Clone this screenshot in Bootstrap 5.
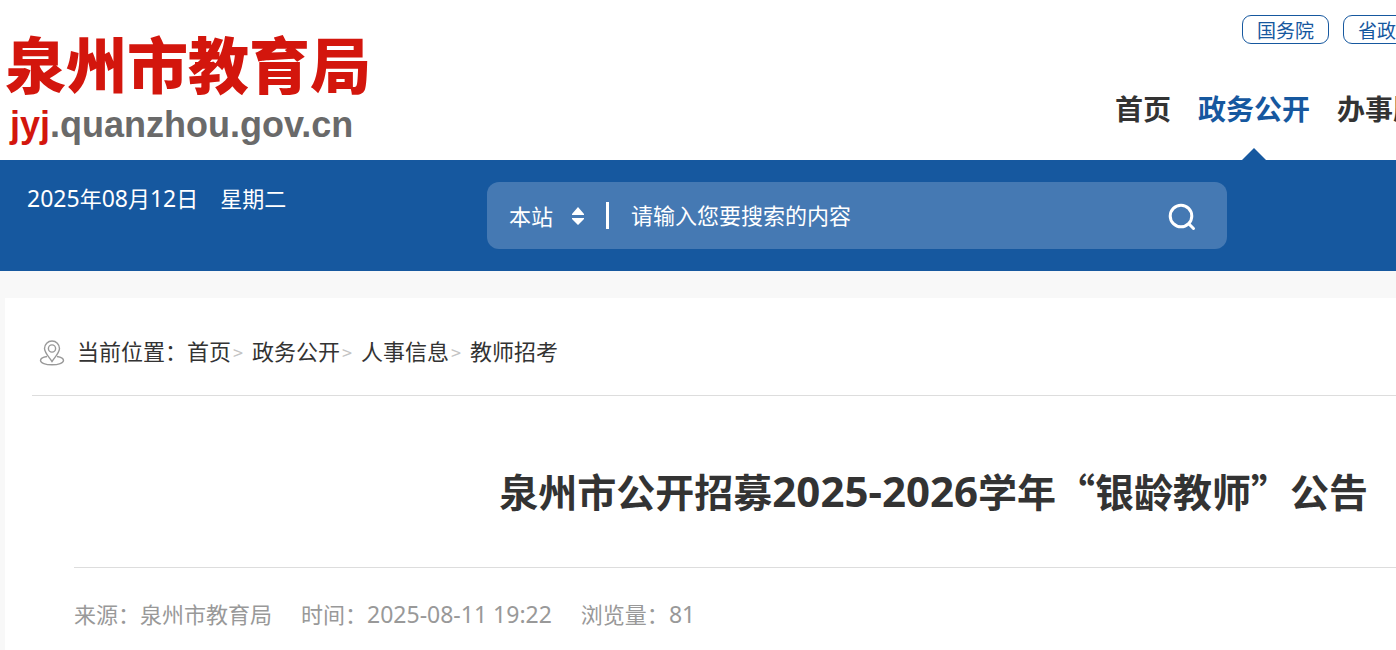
<!DOCTYPE html>
<html lang="zh-CN">
<head>
<meta charset="utf-8">
<meta name="viewport" content="width=device-width, initial-scale=1">
<title>泉州市公开招募2025-2026学年“银龄教师”公告</title>
<link href="https://cdn.jsdelivr.net/npm/bootstrap@5.3.0/dist/css/bootstrap.min.css" rel="stylesheet">
<style>
:root { --gov-blue: #16589f; --gov-red: #d3160d; }
body { font-family: "Noto Sans CJK SC", sans-serif; font-size: 22px; line-height: 32px; color: #333; background: #f8f8f8; overflow-x: hidden; }
a { color: inherit; text-decoration: none; }
.num { font-family: "Noto Sans", "Noto Sans CJK SC", sans-serif; font-size: 23px; }

.site-head { height: 160px; }
.site-logo { padding: 27px 0 0 5px; color: var(--gov-red); font-weight: 900; font-size: 61px; line-height: 72px; }
.site-url { font: 700 36px/48px "Liberation Sans", sans-serif; color: #6a6a6a; padding: 2px 0 0 5px; }
.site-url b { color: var(--gov-red); }
.head-side { flex: 0 0 281px; overflow: hidden; white-space: nowrap; }
.gov-links { padding: 15px 0 0 127px; gap: 14px; }
.gov-links a { flex: none; border: 1px solid var(--gov-blue); border-radius: 9px; color: var(--gov-blue); font-size: 19px; line-height: 27px; padding: 0 14px; }
.main-nav { gap: 27px; margin-top: 44px; font-size: 28px; font-weight: 700; line-height: 40px; }
.main-nav a { flex: none; height: 72px; }
.main-nav .current { color: var(--gov-blue); position: relative; }
.main-nav .current::after { content: ""; position: absolute; left: 50%; bottom: 0; margin-left: -12px; border: 12px solid transparent; border-top: 0; border-bottom-color: var(--gov-blue); }

.blue-bar { background: var(--gov-blue); padding: 22px 169px 22px 27px; color: #fff; }
.today { gap: 22px; line-height: 30px; }
.search-box { width: 740px; height: 67px; border-radius: 12px; background: #4579b3; padding: 0 30px 0 22px; }
.search-box select { appearance: none; border: 0; color: #fff; width: 75px; padding: 0 0 2px; background: url("data:image/svg+xml,%3Csvg xmlns='http://www.w3.org/2000/svg' width='12' height='20'%3E%3Cpath d='M6 1l6 7v1H0V8zM6 19l6-6v-1H0v1z' fill='white'/%3E%3C/svg%3E") right center no-repeat; }
.search-box input { border: 0; background: none; color: #fff; outline: 0; padding: 0 0 4px; min-width: 0; }
.search-box input::placeholder { color: #fff; opacity: 1; }
.bar-split { width: 3px; height: 27px; background: #fff; margin: 0 22px; }
.search-box button { border: 0; background: none; padding: 3px 0 0; color: #fff; }

.article { margin: 27px 0 0 5px; background: #fff; padding-left: 27px; }
.crumb-bar { height: 98px; border-bottom: 1px solid #ddd; padding: 12px 0 0 7px; }
.crumb-bar ol { padding-bottom: 3px; }
.crumb-bar li + li::before { content: ">"; display: inline-block; width: 21px; padding-left: 2px; color: #c4c4c4; font-size: 18px; }
.article-body { padding-left: 42px; }
.article-title { font-size: 39px; line-height: 56px; font-weight: 700; margin: 0; padding: 66px 28px 48px 0; white-space: nowrap; }
.article-title .num { font-size: 42px; }
.article-meta { border-top: 1px solid #ddd; padding: 29px 0 26px; gap: 29px; color: #999; }
</style>
</head>
<body>
<header class="site-head bg-white d-flex justify-content-between">
  <a href="#" class="site-logo d-block">泉州市教育局<span class="site-url d-block"><b>jyj</b>.quanzhou.gov.cn</span></a>
  <div class="head-side">
    <div class="gov-links d-flex"><a href="#">国务院</a><a href="#">省政府</a></div>
    <nav class="main-nav d-flex" aria-label="主导航">
      <a href="#">首页</a><a href="#" class="current" aria-current="page">政务公开</a><a href="#">办事服务</a>
    </nav>
  </div>
</header>

<section class="blue-bar d-flex justify-content-between align-items-start">
  <div class="today d-flex flex-shrink-0"><span><span class="num">2025</span>年<span class="num">08</span>月<span class="num">12</span>日</span><span>星期二</span></div>
  <form class="search-box d-flex align-items-center">
    <select aria-label="搜索范围"><option>本站</option></select>
    <span class="bar-split"></span>
    <input class="flex-grow-1" type="text" placeholder="请输入您要搜索的内容" aria-label="搜索内容">
    <button type="button" aria-label="搜索">
      <svg class="d-block" width="30" height="30" viewBox="0 0 30 30" fill="none" stroke="currentColor" stroke-width="3" stroke-linecap="round"><circle cx="14" cy="14" r="10.8"/><path d="M22 22l4.500 4.500"/></svg>
    </button>
  </form>
</section>

<main class="article">
  <nav class="crumb-bar d-flex align-items-center" aria-label="当前位置">
    <svg class="flex-shrink-0 me-2" width="26" height="28" viewBox="0 0 26 28" fill="none" stroke="#999" stroke-width="1.4"><path d="M13 22.500C10 18 5.500 13.500 5.500 9.500a7.500 7.500 0 0 1 15 0c0 4-4.500 8.500-7.500 13z"/><circle cx="13" cy="9.500" r="3.600"/><path d="M8 17.500c-4 .6-6.500 2-6.500 4 0 2.500 5 4.300 11.500 4.300s11.500-1.800 11.500-4.300c0-2-2.500-3.400-6.500-4"/></svg>
    <ol class="list-unstyled d-flex mb-0 ms-1">
      <li>当前位置：<a href="#">首页</a></li><li><a href="#">政务公开</a></li><li><a href="#">人事信息</a></li><li><a href="#">教师招考</a></li>
    </ol>
  </nav>
  <article class="article-body">
    <h1 class="article-title text-end">泉州市公开招募<span class="num">2025-2026</span>学年“银龄教师”公告</h1>
    <div class="article-meta d-flex">
      <span>来源：泉州市教育局</span><span>时间：<span class="num">2025-08-11 19:22</span></span><span>浏览量：<span class="num">81</span></span>
    </div>
  </article>
</main>
<script src="https://cdn.jsdelivr.net/npm/bootstrap@5.3.0/dist/js/bootstrap.bundle.min.js"></script>
</body>
</html>
